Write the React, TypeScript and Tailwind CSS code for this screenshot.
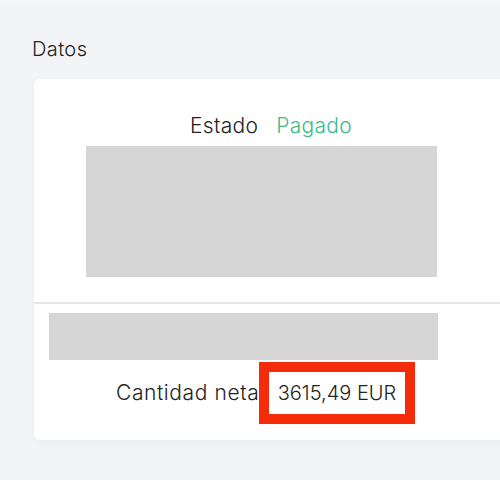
import React from "react";

export default function App() {
  return (
    <div
      className="w-[500px] h-[480px] overflow-hidden bg-[#f3f4f6] text-[#222222] font-light"
      style={{ fontFamily: "Inter, 'Noto Sans', sans-serif" }}
    >
      <div className="h-[4px] bg-[#f5f6f7]" />
      <div className="pt-[33px] pl-[32px] text-[20px] leading-[24px] tracking-[0.4px]">Datos</div>
      <div className="mt-[18px] ml-[34px] w-[520px] bg-white rounded-[6px] shadow-[0_2px_8px_rgba(0,0,0,0.04)] flex flex-col pt-[35px] pb-[16px]">
        <div className="flex pl-[156px] gap-[18px] text-[21px] leading-[24px] tracking-[0.3px]">
          <span>Estado</span>
          <span className="text-[#3dbb8a]">Pagado</span>
        </div>
        <div className="mt-[8px] ml-[52px] w-[351px] h-[131px] bg-[#d6d6d6]" />
        <div className="mt-[25px] h-[2px] bg-[#e6e6e6]" />
        <div className="mt-[9px] ml-[15px] w-[389px] h-[47px] bg-[#d6d6d6]" />
        <div className="mt-[2px] flex items-center">
          <span className="pl-[82px] w-[225px] text-[21px] leading-[24px] tracking-[0.6px] whitespace-nowrap">Cantidad neta</span>
          <div className="w-[156px] h-[62px] border-[10px] border-[#f52c0a] bg-white flex items-center justify-center text-[20px] leading-[24px] whitespace-nowrap">
            3615,49 EUR
          </div>
        </div>
      </div>
    </div>
  );
}
